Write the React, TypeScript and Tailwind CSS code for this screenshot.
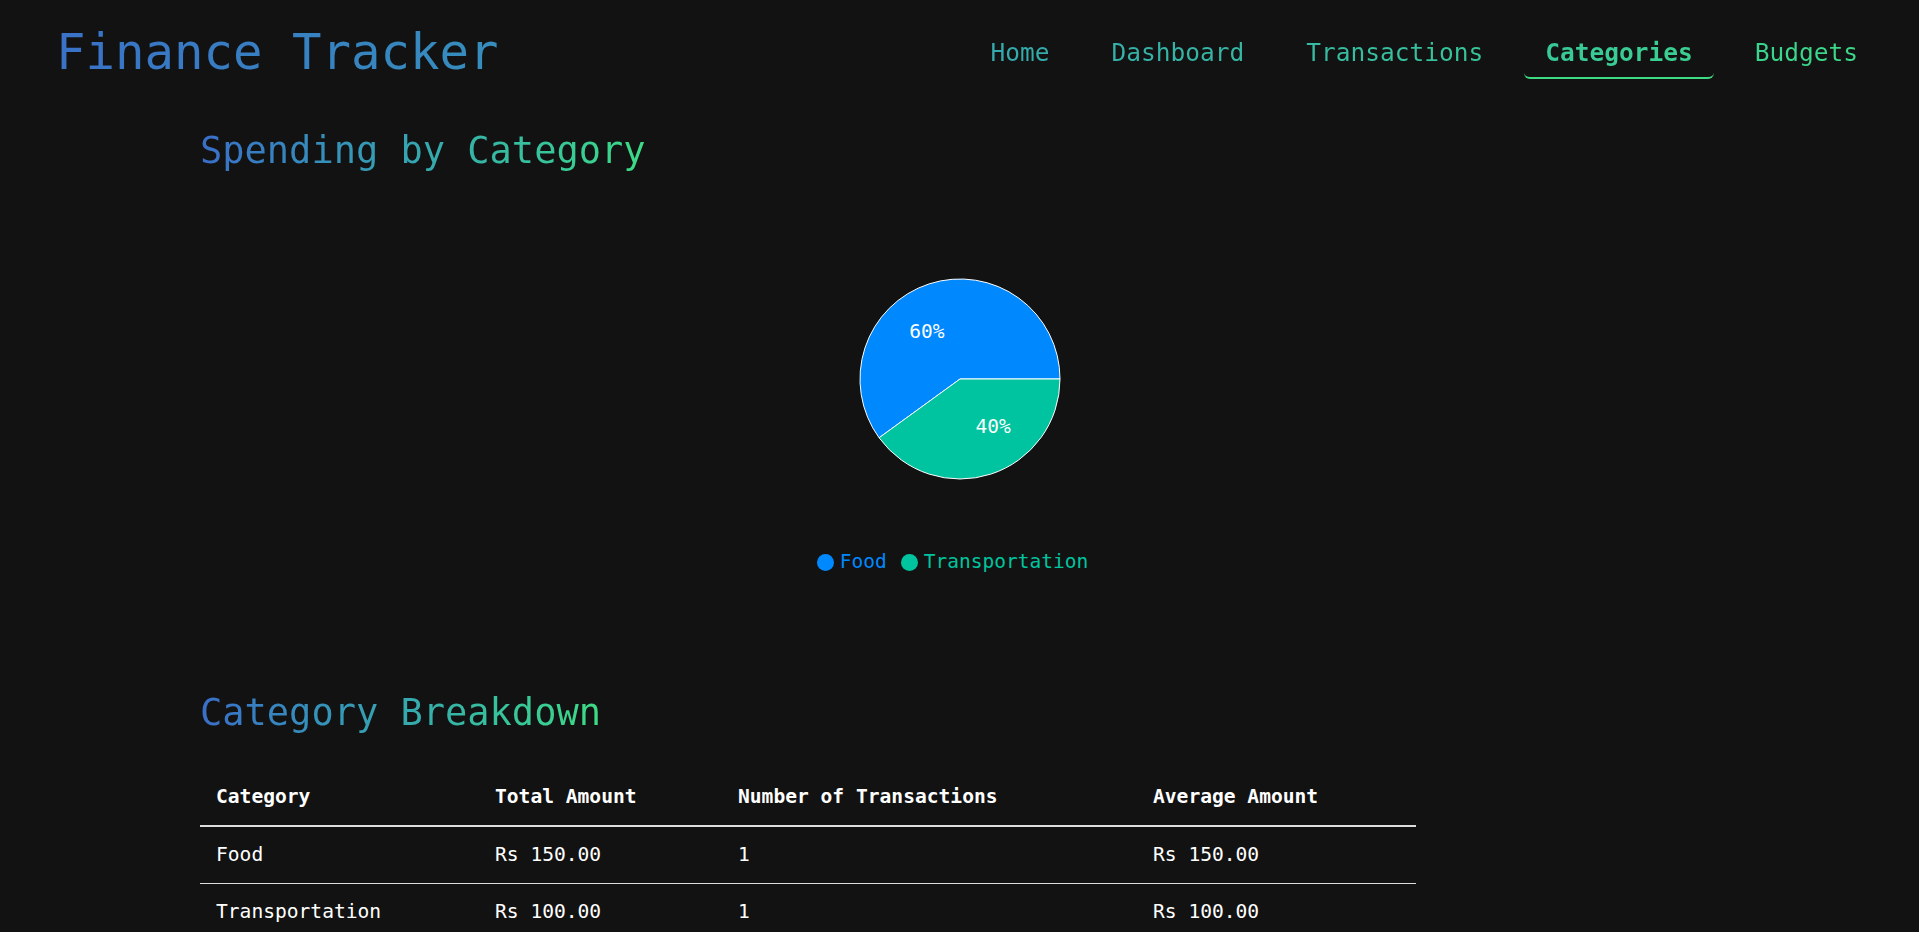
import React from 'react';

const NAV_LINKS = ['Home', 'Dashboard', 'Transactions', 'Categories', 'Budgets'];

const CATEGORIES = [
  { name: 'Food', total: 150, count: 1, color: '#0088FE' },
  { name: 'Transportation', total: 100, count: 1, color: '#00C49F' },
];

const Header: React.FC = () => (
  <header className="flex items-start justify-between pl-14 pr-10 pt-[28px] bg-linear-to-r from-[#3a6ec8] to-[#3ddc84] bg-clip-text text-transparent">
    <h1 className="text-[49px] leading-none">Finance Tracker</h1>
    <nav>
      <ul className="flex gap-5">
        {NAV_LINKS.map((link) => {
          const active = link === 'Categories';
          return (
            <li key={link}>
              <a
                href="#"
                className={`block px-[21px] pt-[9px] pb-[8px] text-[24.5px] leading-8 border-b-2 rounded-md ${
                  active ? 'font-bold border-[#3ddc84]' : 'border-transparent'
                }`}
              >
                {link}
              </a>
            </li>
          );
        })}
      </ul>
    </nav>
  </header>
);

const PieChart: React.FC = () => (
  <svg width="220" height="220" viewBox="0 0 220 220">
    <path d="M110,110 L210,110 A100,100 0 1,0 29.1,168.78 Z" fill="#0088FE" stroke="#fff" strokeWidth="1" />
    <path d="M110,110 L29.1,168.78 A100,100 0 0,0 210,110 Z" fill="#00C49F" stroke="#fff" strokeWidth="1" />
    <text x="94.5" y="62.4" fill="#fff" textAnchor="end" dominantBaseline="central" fontSize="19.5">
      60%
    </text>
    <text x="125.5" y="157.6" fill="#fff" textAnchor="start" dominantBaseline="central" fontSize="19.5">
      40%
    </text>
  </svg>
);

// pb keeps descenders inside the clipped gradient background
const GradientTitle: React.FC<{ children: React.ReactNode; className?: string }> = ({ children, className }) => (
  <h2
    className={`inline-block pb-2 text-[37px] leading-none bg-linear-to-r from-[#3a6ec8] to-[#3ddc84] bg-clip-text text-transparent ${className ?? ''}`}
  >
    {children}
  </h2>
);

export default function App() {
  return (
    <div className="min-h-screen bg-[#121212] font-['DejaVu_Sans_Mono',monospace] text-white">
      <Header />
      <main className="px-[200px]">
        <section>
          <GradientTitle className="mt-[53px]">Spending by Category</GradientTitle>
          <div className="mt-[92px] flex justify-center">
            <PieChart />
          </div>
          <div className="mt-[61px] flex justify-center pr-[14px] text-[19.5px] leading-6">
            {CATEGORIES.map((c, i) => (
              <div key={c.name} className={`flex items-center gap-[6px] ${i > 0 ? 'ml-[14px]' : ''}`}>
                <span className="h-[17px] w-[17px] rounded-full" style={{ backgroundColor: c.color }} />
                <span style={{ color: c.color }}>{c.name}</span>
              </div>
            ))}
          </div>
        </section>

        <section>
          <GradientTitle className="mt-[120px]">Category Breakdown</GradientTitle>
          <table className="mt-[29px] w-[1216px] text-left text-[19.6px] leading-6">
            <thead>
              <tr className="border-b-2 border-[#dddddd]">
                <th className="w-[279px] px-4 py-[16.5px] font-bold">Category</th>
                <th className="w-[243px] px-4 py-[16.5px] font-bold">Total Amount</th>
                <th className="w-[415px] px-4 py-[16.5px] font-bold">Number of Transactions</th>
                <th className="w-[279px] px-4 py-[16.5px] font-bold">Average Amount</th>
              </tr>
            </thead>
            <tbody>
              {CATEGORIES.map((c) => (
                <tr key={c.name} className="border-b border-[#dddddd]">
                  <td className="px-4 py-4">{c.name}</td>
                  <td className="px-4 py-4">Rs {c.total.toFixed(2)}</td>
                  <td className="px-4 py-4">{c.count}</td>
                  <td className="px-4 py-4">Rs {(c.total / c.count).toFixed(2)}</td>
                </tr>
              ))}
            </tbody>
          </table>
        </section>
      </main>
    </div>
  );
}
